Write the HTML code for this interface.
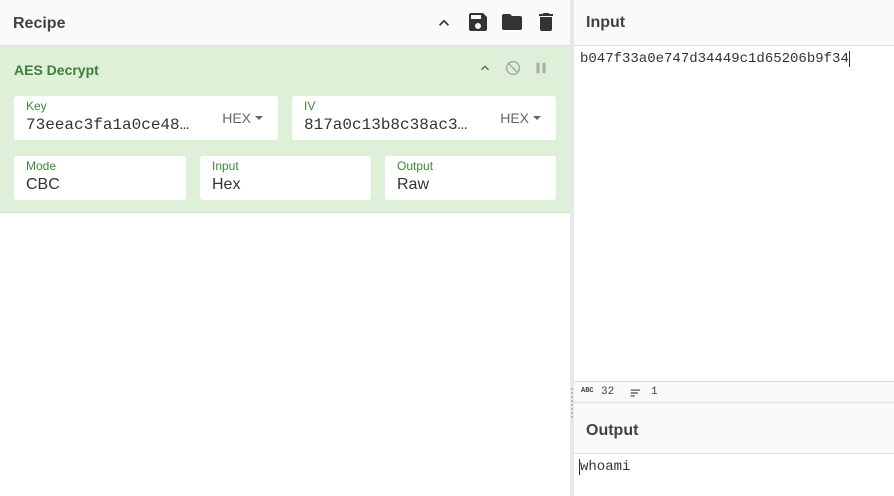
<!DOCTYPE html>
<html><head><style>
*{box-sizing:border-box;margin:0;padding:0}
body{width:894px;height:496px;overflow:hidden;background:#fff;font-family:"Liberation Sans",sans-serif;position:relative}
.abs{position:absolute}
.hdr{background:#fafafa;border-bottom:1px solid #ddd;height:46px;font-size:16px;font-weight:bold;color:#424242}
.mono{font-family:"Liberation Mono",monospace}
.field{position:absolute;background:#fff;border-radius:3px;height:44px}
.lab{position:absolute;left:12px;top:3px;font-size:12px;color:#3a8a3a}
.val{position:absolute;left:12px;top:20px;font-size:16px;color:#333}
.hex{position:absolute;right:14px;top:14px;font-size:14px;color:#666}
.hex:after{content:"";display:inline-block;margin-left:4px;vertical-align:3px;border-left:4px solid transparent;border-right:4px solid transparent;border-top:4px solid #666}
</style></head><body>
<div class="abs hdr" style="left:0;top:0;width:570px"><span class="abs" style="left:13px;top:15px">Recipe</span>
<svg class="abs" style="left:434px;top:13px" width="20" height="20" viewBox="0 0 24 24"><path d="M7.4 15.4L12 10.8l4.6 4.6L18 14l-6-6-6 6z" fill="#333"/></svg>
<svg class="abs" style="left:466px;top:10px" width="24" height="24" viewBox="0 0 24 24"><path d="M17 3H5a2 2 0 0 0-2 2v14a2 2 0 0 0 2 2h14a2 2 0 0 0 2-2V7l-4-4zm-5 16a3 3 0 1 1 0-6 3 3 0 0 1 0 6zm3-10H5V5h10v4z" fill="#333"/></svg>
<svg class="abs" style="left:500px;top:10px" width="24" height="24" viewBox="0 0 24 24"><path d="M10 4H4a2 2 0 0 0-2 2v12a2 2 0 0 0 2 2h16a2 2 0 0 0 2-2V8a2 2 0 0 0-2-2h-8l-2-2z" fill="#333"/></svg>
<svg class="abs" style="left:534px;top:10px" width="24" height="24" viewBox="0 0 24 24"><path d="M6 19a2 2 0 0 0 2 2h8a2 2 0 0 0 2-2V7H6v12zM19 4h-3.5l-1-1h-5l-1 1H5v2h14V4z" fill="#333"/></svg>
</div>
<div class="abs" style="left:0;top:46px;width:570px;height:167px;background:#dff0d8;border-bottom:1px solid #cfe6c4">
<span class="abs" style="left:14px;top:16px;font-size:14px;font-weight:bold;color:#3b7d3b">AES Decrypt</span>
<svg class="abs" style="left:477px;top:14px" width="16" height="16" viewBox="0 0 24 24"><path d="M7.4 15.4L12 10.8l4.6 4.6L18 14l-6-6-6 6z" fill="#3b7d3b"/></svg>
<svg class="abs" style="left:504px;top:13px" width="18" height="18" viewBox="0 0 24 24"><circle cx="12" cy="12" r="8.5" fill="none" stroke="#aaa" stroke-width="2"/><path d="M6 6l12 12" stroke="#aaa" stroke-width="2"/></svg>
<svg class="abs" style="left:532px;top:13px" width="18" height="18" viewBox="0 0 24 24"><path d="M6 5h4v14H6zM14 5h4v14h-4z" fill="#aaa"/></svg>
<div class="field" style="left:14px;top:50px;width:264px"><span class="lab">Key</span><span class="val mono" style="font-size:16px;top:20px">73eeac3fa1a0ce48…</span><span class="hex" style="right:15px">HEX</span></div>
<div class="field" style="left:292px;top:50px;width:264px"><span class="lab">IV</span><span class="val mono" style="font-size:16px;top:20px">817a0c13b8c38ac3…</span><span class="hex" style="right:15px">HEX</span></div>
<div class="field" style="left:14px;top:110px;width:172px"><span class="lab">Mode</span><span class="val">CBC</span></div>
<div class="field" style="left:200px;top:110px;width:171px"><span class="lab">Input</span><span class="val">Hex</span></div>
<div class="field" style="left:385px;top:110px;width:171px"><span class="lab">Output</span><span class="val">Raw</span></div>
</div>
<div class="abs" style="left:570px;top:0;width:4px;height:496px;background:#e8e8e8"></div>
<div class="abs hdr" style="left:574px;top:0;width:320px"><span class="abs" style="left:12px;top:14px">Input</span></div>
<div class="abs mono" style="left:580px;top:51px;font-size:14px;color:#333">b047f33a0e747d34449c1d65206b9f34<span style="border-left:1px solid #333"> </span></div>
<div class="abs" style="left:574px;top:381px;width:320px;height:23px;background:#fafafa;border-top:1px solid #ddd;border-bottom:3px solid #eee;font-size:11px;color:#444">
<span class="abs mono" style="left:7px;top:5px;font-size:7px;font-weight:bold">ABC</span><span class="abs mono" style="left:27px;top:4px">32</span>
<svg class="abs" style="left:55px;top:4px" width="14" height="14" viewBox="0 0 24 24"><path d="M3 6h16v2H3zM3 11h12v2H3zM3 16h7v2H3z" fill="#444"/></svg><span class="abs mono" style="left:77px;top:4px">1</span></div>
<div class="abs" style="left:570px;top:388px;width:4px;height:30px;border-left:2px dotted #bbb;margin-left:1px"></div>
<div class="abs hdr" style="left:574px;top:405px;width:320px;height:49px"><span class="abs" style="left:12px;top:17px">Output</span></div>
<div class="abs mono" style="left:579px;top:459px;font-size:14px;color:#333;border-left:1px solid #333">whoami</div>
</body></html>
